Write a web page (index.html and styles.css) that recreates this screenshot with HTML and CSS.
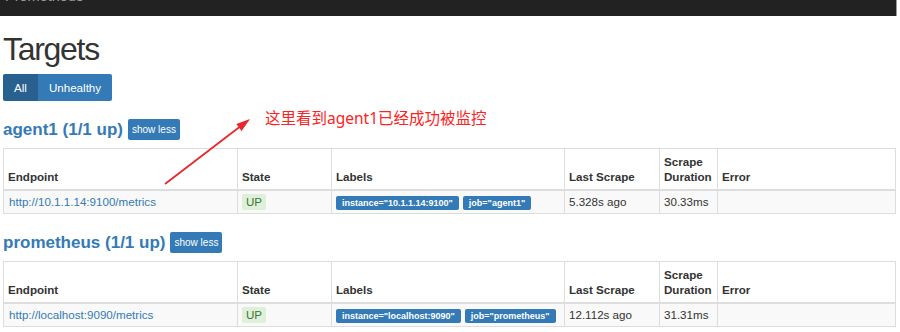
FILE: index.html
```html
<!DOCTYPE html>
<html lang="en">
<head>
    <meta charset="UTF-8">
    <title>Prometheus Time Series Collection and Processing Server</title>
    <link rel="stylesheet" href="styles.css">
</head>
<body>

<div class="page">
    <div class="navbar">
        <span class="brand">Prometheus</span>
        <span class="nav-item">Alerts</span>
        <span class="nav-item">Graph</span>
        <span class="nav-item nav-dropdown">Status</span>
        <span class="nav-item">Help</span>
    </div>

    <div class="container">
        <h1 class="title">Targets</h1>
        <div class="btn-group">
            <button class="btn active">All</button>
            <button class="btn">Unhealthy</button>
        </div>

        <div class="job">
            <div class="job-head">
                <h2 class="job-title"><a href="#job-agent1">agent1 (1/1 up)</a></h2>
                <button class="btn-xs">show less</button>
            </div>
            <table class="targets">
                <colgroup>
                    <col class="c-endpoint"><col class="c-state"><col class="c-labels">
                    <col class="c-last"><col class="c-dur"><col>
                </colgroup>
                <thead>
                    <tr>
                        <th>Endpoint</th>
                        <th>State</th>
                        <th>Labels</th>
                        <th>Last Scrape</th>
                        <th>Scrape<br>Duration</th>
                        <th>Error</th>
                    </tr>
                </thead>
                <tbody>
                    <tr>
                        <td class="endpoint"><a href="#">http://10.1.1.14:9100/metrics</a></td>
                        <td><span class="state-up">UP</span></td>
                        <td><span class="label">instance="10.1.1.14:9100"</span><span class="label">job="agent1"</span></td>
                        <td>5.328s ago</td>
                        <td>30.33ms</td>
                        <td></td>
                    </tr>
                </tbody>
            </table>
        </div>

        <div class="job">
            <div class="job-head">
                <h2 class="job-title"><a href="#job-prometheus">prometheus (1/1 up)</a></h2>
                <button class="btn-xs">show less</button>
            </div>
            <table class="targets">
                <colgroup>
                    <col class="c-endpoint"><col class="c-state"><col class="c-labels">
                    <col class="c-last"><col class="c-dur"><col>
                </colgroup>
                <thead>
                    <tr>
                        <th>Endpoint</th>
                        <th>State</th>
                        <th>Labels</th>
                        <th>Last Scrape</th>
                        <th>Scrape<br>Duration</th>
                        <th>Error</th>
                    </tr>
                </thead>
                <tbody>
                    <tr>
                        <td class="endpoint"><a href="#">http://localhost:9090/metrics</a></td>
                        <td><span class="state-up">UP</span></td>
                        <td><span class="label">instance="localhost:9090"</span><span class="label">job="prometheus"</span></td>
                        <td>12.112s ago</td>
                        <td>31.31ms</td>
                        <td></td>
                    </tr>
                </tbody>
            </table>
        </div>
    </div>

    <!-- annotation drawn over the screenshot -->
    <svg class="arrow" width="900" height="332" viewBox="0 0 900 332">
        <line x1="165" y1="184" x2="239.5" y2="127" stroke="#e8282c" stroke-width="1.8"/>
        <polygon points="250,119 241.6,131 236.3,124" fill="#e8282c"/>
    </svg>
    <div class="note">这里看到agent1已经成功被监控</div>
</div>

</body>
</html>
```

FILE: styles.css
```css
body { margin: 0; font-family: "Liberation Sans", Arial, sans-serif; font-size: 11.6px; color: #333; background: #fff; }
a { color: #337ab7; text-decoration: none; }
.page { position: relative; width: 896px; }

.navbar { box-sizing: border-box; width: 897px; height: 16px; background: #222; border-right: 1px solid #9a9a9a; overflow: hidden; display: flex; align-items: flex-end; color: #9d9d9d; }
.brand { font-size: 14.5px; line-height: 16px; margin: 0 0 12px 5px; }
.nav-item { font-size: 11.6px; line-height: 16px; margin: 0 0 14px 27px; }
.nav-dropdown { padding-right: 8px; }

.container { padding: 0 3px; }
.title { font-size: 32px; font-weight: normal; line-height: 33px; letter-spacing: -1.3px; margin: 17px 0 8px; }

.btn-group { display: flex; }
.btn { height: 27px; line-height: 27px; padding: 0 11px; border: none; background: #337ab7; color: #fff; font-family: inherit; font-size: 11.6px; }
.btn:first-child { border-radius: 2px 0 0 2px; }
.btn:last-child { border-radius: 0 2px 2px 0; }
.btn.active { background: #286090; }

.job { margin-top: 18px; }
.job-head { display: flex; align-items: center; gap: 5px; height: 21px; }
.job-title { margin: 0; font-size: 17px; font-weight: bold; line-height: 21px; }
.btn-xs { height: 21px; padding: 0 4px; border: none; border-radius: 2px; background: #337ab7; color: #fff; font-family: inherit; font-size: 10px; }

.targets { margin-top: 8px; width: 893px; border-collapse: collapse; table-layout: fixed; }
.c-endpoint { width: 234px; }
.c-state { width: 94px; }
.c-labels { width: 233px; }
.c-last { width: 95px; }
.c-dur { width: 58px; }
.targets th, .targets td { border: 1px solid #ddd; text-align: left; white-space: nowrap; overflow: hidden; }
.targets th { padding: 5px 4px; line-height: 15px; vertical-align: bottom; border-bottom-width: 2px; font-weight: bold; }
.targets td { padding: 3px 4px; line-height: 16px; background: #f9f9f9; }
.targets td.endpoint { padding-left: 5px; }

.state-up { display: inline-block; padding: 0 4px; line-height: 16px; background: #dff0d8; color: #3c763d; border-radius: 2px; }
.label { display: inline-block; margin-right: 4px; padding: 0 6px; line-height: 14px; background: #337ab7; color: #fff; font-size: 9px; font-weight: bold; border-radius: 2px; vertical-align: middle; }

.arrow { position: absolute; left: 0; top: 0; pointer-events: none; }
.note { position: absolute; left: 265px; top: 107px; color: #f22; font-family: "Noto Sans", "Noto Sans CJK SC", sans-serif; font-size: 15.5px; line-height: 22px; }
```
